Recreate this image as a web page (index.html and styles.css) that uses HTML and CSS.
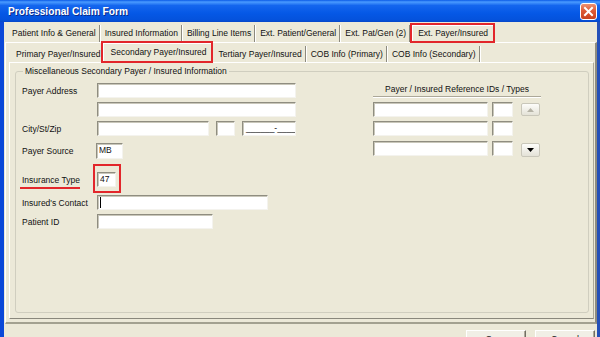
FILE: index.html
```html
<!DOCTYPE html>
<html lang="en">
<head>
    <meta charset="UTF-8">
    <meta name="viewport" content="width=device-width, initial-scale=1.0">
    <title>Professional Claim Form</title>
    <link rel="stylesheet" href="styles.css">
</head>
<body>
    <div class="window">
        <div class="title-bar">
            <span class="title">Professional Claim Form</span>
            <div class="close-btn">
                <svg width="11" height="11" viewBox="0 0 11 11"><path d="M2 2 L9 9 M9 2 L2 9" stroke="#fff" stroke-width="2" stroke-linecap="square"/></svg>
            </div>
        </div>

        <div class="client">
            <!-- Main tabs -->
            <div class="tabs outer-tabs">
                <div class="tab">Patient Info &amp; General</div>
                <div class="tab">Insured Information</div>
                <div class="tab">Billing Line Items</div>
                <div class="tab">Ext. Patient/General</div>
                <div class="tab">Ext. Pat/Gen (2)</div>
                <div class="tab active">Ext. Payer/Insured</div>
            </div>

            <div class="outer-panel">
                <!-- Payer sub tabs -->
                <div class="tabs inner-tabs">
                    <div class="tab no-sep">Primary Payer/Insured</div>
                    <div class="tab active">Secondary Payer/Insured</div>
                    <div class="tab">Tertiary Payer/Insured</div>
                    <div class="tab">COB Info (Primary)</div>
                    <div class="tab">COB Info (Secondary)</div>
                </div>

                <div class="inner-panel">
                    <fieldset class="group">
                        <legend>Miscellaneous Secondary Payer / Insured Information</legend>
                        <div class="group-body">
                            <div class="form-col">
                                <div class="row">
                                    <label>Payer Address</label>
                                    <div class="field w-addr"></div>
                                </div>
                                <div class="row">
                                    <label></label>
                                    <div class="field w-addr"></div>
                                </div>
                                <div class="row">
                                    <label>City/St/Zip</label>
                                    <div class="field w-city"></div>
                                    <div class="field w-st"></div>
                                    <div class="field w-zip">______-____</div>
                                </div>
                                <div class="row row-source">
                                    <label>Payer Source</label>
                                    <div class="field w-src">MB</div>
                                </div>
                                <div class="row row-type">
                                    <label><span class="underlined">Insurance Type</span></label>
                                    <div class="marked-box">
                                        <div class="field w-type">47</div>
                                    </div>
                                </div>
                                <div class="row">
                                    <label>Insured's Contact</label>
                                    <div class="field w-contact"><span class="caret"></span></div>
                                </div>
                                <div class="row">
                                    <label>Patient ID</label>
                                    <div class="field w-pid"></div>
                                </div>
                            </div>

                            <div class="ref-col">
                                <div class="ref-title">Payer / Insured Reference IDs / Types</div>
                                <div class="ref-row">
                                    <div class="field ref-id"></div>
                                    <div class="field ref-type"></div>
                                    <div class="spin">
                                        <svg width="7" height="4" viewBox="0 0 7 4"><polygon points="0,4 7,4 3.5,0" fill="#B5B3A6"/></svg>
                                    </div>
                                </div>
                                <div class="ref-row">
                                    <div class="field ref-id"></div>
                                    <div class="field ref-type"></div>
                                </div>
                                <div class="ref-row">
                                    <div class="field ref-id"></div>
                                    <div class="field ref-type"></div>
                                    <div class="spin down">
                                        <svg width="7" height="4" viewBox="0 0 7 4"><polygon points="0,0 7,0 3.5,4" fill="#000"/></svg>
                                    </div>
                                </div>
                            </div>
                        </div>
                    </fieldset>
                </div>
            </div>

            <div class="buttons">
                <button>Save</button>
                <button>Cancel</button>
            </div>
        </div>
    </div>
</body>
</html>
```

FILE: styles.css
```css
* {
    box-sizing: border-box;
}

body {
    margin: 0;
    background: #ECE9D8;
    font-family: "Liberation Sans", Arial, sans-serif;
    font-size: 8.5px;
    color: #111;
    overflow: hidden;
}

.window {
    width: 600px;
    height: 337px;
    display: flex;
    flex-direction: column;
    overflow: hidden;
}

/* Title bar */
.title-bar {
    height: 22px;
    flex: none;
    display: flex;
    align-items: center;
    justify-content: space-between;
    padding: 0 3px 0 8px;
    background: linear-gradient(to bottom, #0A5AE6 0%, #4A9BFF 9%, #1466EE 25%, #0558E6 60%, #0452DC 90%, #0646C8 100%);
}

.title {
    color: #fff;
    font-weight: bold;
    font-size: 10.2px;
    text-shadow: 1px 1px 0 #0B2A8A;
}

.close-btn {
    width: 17px;
    height: 17px;
    border: 1px solid #fff;
    border-radius: 3px;
    background: linear-gradient(to bottom, #EC9274 0%, #DD5A36 45%, #C8421F 100%);
    display: flex;
    align-items: center;
    justify-content: center;
}

/* Window body */
.client {
    flex: 1;
    display: flex;
    flex-direction: column;
    border-left: 4px solid #0B48D8;
    border-right: 3px solid #2450B8;
    background: #ECE9D8;
}

.tabs {
    display: flex;
    align-items: flex-end;
    flex: none;
}

.tab {
    position: relative;
    padding: 0 3px 0 5px;
    white-space: nowrap;
    border-right: 1px solid #8C8A7E;
    box-shadow: 1px 0 0 #fff;
}

.tab.no-sep {
    padding-right: 0;
    border-right: none;
    box-shadow: none;
}

.tab.active {
    z-index: 1;
    margin-bottom: -1px;
    padding: 0 5px 0 6px;
    border: 2px solid #E2262B;
    box-shadow: inset 1px 1px 0 #fff;
    background: #ECE9D8;
}

.outer-tabs {
    height: 20px;
    padding-left: 3px;
}

.outer-tabs .tab {
    height: 17px;
    line-height: 16px;
}

.outer-tabs .tab.active {
    height: 20px;
    line-height: 16px;
}

.outer-panel {
    height: 282px;
    flex: none;
    margin: 0 0 0 1px;
    padding: 0 1px 3px 3px;
    border-top: 1px solid #fff;
    border-left: 1px solid #fff;
    border-right: 2px solid #8E8C80;
    border-bottom: 2px solid #A3A190;
    display: flex;
    flex-direction: column;
}

.inner-tabs {
    height: 19px;
    padding-left: 2px;
}

.inner-tabs .tab {
    height: 16px;
    line-height: 16px;
}

.inner-tabs .tab.active {
    height: 22px;
    line-height: 19px;
    padding: 0 5px 0 8px;
}

.inner-panel {
    height: 257px;
    flex: none;
    padding: 3px 4px 5px 5px;
    border-top: 1px solid #fff;
    border-left: 1px solid #fff;
    border-right: 1px solid #ACA899;
    border-bottom: 1px solid #8A887C;
    display: flex;
    flex-direction: column;
}

/* Group box */
.group {
    flex: 1;
    min-width: 0;
    margin: 0;
    padding: 6px 0 0 6px;
    border: 1px solid #D0CEBF;
    border-radius: 3px;
}

.group legend {
    margin-left: 1px;
    padding: 0 2px;
    line-height: 11px;
}

.group-body {
    display: flex;
}

.form-col {
    width: 275px;
    flex: none;
}

.row {
    display: flex;
    align-items: center;
    height: 15px;
    margin-bottom: 4px;
}

.row label {
    width: 75px;
    flex: none;
}

.row-source {
    margin-top: 7px;
    height: 16px;
}

.row-type {
    height: 29px;
    margin-top: 5px;
    margin-bottom: 2px;
    align-items: flex-end;
}

.row-type label {
    margin-bottom: 4px;
}

.underlined {
    display: inline-block;
    margin-left: -2px;
    padding: 0 0 1px 2px;
    border-bottom: 2px solid #E2262B;
    line-height: 11px;
}

.marked-box {
    margin-left: -4px;
    padding: 6px 3px 4px 2px;
    border: 2px solid #E2262B;
}

.field {
    height: 15px;
    padding-left: 2px;
    line-height: 12px;
    background: #fff;
    border: 1px solid;
    border-color: #8F8D80 #F4F3EE #F4F3EE #8F8D80;
    box-shadow: inset 1px 1px 0 #C9C7BA;
    white-space: nowrap;
    overflow: hidden;
}

.w-addr { width: 199px; }
.w-city { width: 112px; }
.w-st { width: 19px; margin-left: 7px; }
.w-zip { width: 54px; margin-left: 7px; padding-left: 3px; }
.w-src { width: 27px; height: 16px; margin-left: -1px; }
.w-type { width: 19px; }
.w-contact { width: 171px; }
.w-pid { width: 116px; }

.caret {
    display: inline-block;
    width: 1px;
    height: 11px;
    margin-top: 1px;
    background: #000;
}

/* Reference IDs */
.ref-col {
    width: 168px;
    flex: none;
    margin-left: 76px;
}

.ref-title {
    height: 14px;
    line-height: 13px;
    text-align: center;
    border-bottom: 1px solid #ACA899;
    box-shadow: 0 1px 0 #fff;
    margin-bottom: 5px;
}

.ref-row {
    display: flex;
    align-items: center;
    height: 15px;
    margin-bottom: 4px;
}

.ref-row:last-child {
    margin-top: 5px;
}

.ref-id { width: 115px; }
.ref-type { width: 21px; margin-left: 4px; }

.spin {
    width: 19px;
    height: 13px;
    margin-left: 8px;
    border: 1px solid #C9C7BA;
    border-radius: 2px;
    background: linear-gradient(to bottom, #FDFDFA, #E4E2D7);
    display: flex;
    align-items: center;
    justify-content: center;
}

.spin.down {
    height: 14px;
    margin-top: 2px;
}

/* Dialog buttons */
.buttons {
    display: flex;
    justify-content: flex-end;
    gap: 9px;
    padding: 6px 2px 0 0;
}

.buttons button {
    width: 60px;
    height: 18px;
    padding: 0;
    font-family: "Liberation Sans", Arial, sans-serif;
    font-size: 9px;
    line-height: 16px;
    color: #111;
    background: #F1EFE6;
    border: 1px solid;
    border-color: #fff #716F64 #716F64 #fff;
    box-shadow: inset -1px -1px 0 #ACA899;
}
```
